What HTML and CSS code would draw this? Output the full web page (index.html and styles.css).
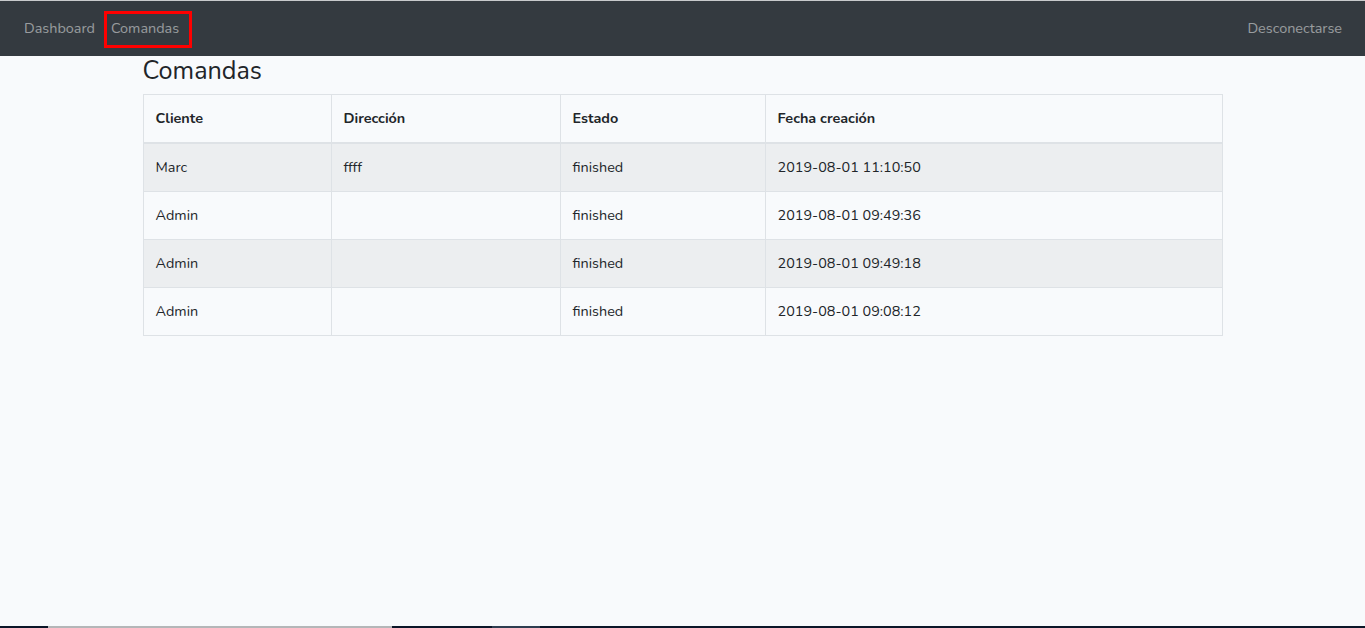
FILE: index.html
```html
<!DOCTYPE html>
<html lang="es">
<head>
<meta charset="utf-8">
<title>Comandas</title>
<link rel="stylesheet" href="styles.css">
</head>
<body>
<div class="topline"></div>
<nav class="navbar">
  <ul class="nav-left">
    <li><a class="nav-link" href="#">Dashboard</a></li>
    <li><a class="nav-link active" href="#">Comandas</a></li>
  </ul>
  <a class="nav-link" href="#">Desconectarse</a>
</nav>
<main class="page">
  <h3 class="title">Comandas</h3>
  <table class="table">
    <thead>
      <tr><th class="c1">Cliente</th><th class="c2">Dirección</th><th class="c3">Estado</th><th>Fecha creación</th></tr>
    </thead>
    <tbody>
      <tr class="odd"><td>Marc</td><td>ffff</td><td>finished</td><td>2019-08-01 11:10:50</td></tr>
      <tr><td>Admin</td><td></td><td>finished</td><td>2019-08-01 09:49:36</td></tr>
      <tr class="odd"><td>Admin</td><td></td><td>finished</td><td>2019-08-01 09:49:18</td></tr>
      <tr><td>Admin</td><td></td><td>finished</td><td>2019-08-01 09:08:12</td></tr>
    </tbody>
  </table>
</main>
<div class="taskbar">
  <span class="seg dark s1"></span>
  <span class="seg gray s2"></span>
  <span class="seg dark s3"></span>
  <span class="seg slate s4"></span>
  <span class="seg dark s5"></span>
</div>
</body>
</html>
```
FILE: styles.css
```css
html, body {
  margin: 0;
  padding: 0;
  height: 100%;
}
body {
  background: #f8fafc;
  color: #212529;
  font-family: "Nunito", "Lato", "Noto Sans", sans-serif;
  font-size: 14.4px;
  line-height: 1.6;
  display: flex;
  flex-direction: column;
}
.topline {
  height: 1px;
  background: #c8cacc;
}
.navbar {
  background: #343a40;
  height: 55px;
  display: flex;
  align-items: center;
  justify-content: space-between;
  padding: 0 15px 0 16px;
  box-sizing: border-box;
}
.nav-left {
  list-style: none;
  margin: 0;
  padding: 0;
  display: flex;
}
.nav-link {
  display: block;
  color: rgba(255, 255, 255, 0.5);
  text-decoration: none;
  padding: 8px 8px;
  line-height: 23px;
}
.nav-link.active {
  position: relative;
}
.nav-link.active::after {
  content: "";
  position: absolute;
  left: 1px;
  top: 2px;
  right: -5px;
  bottom: 0;
  border: 3px solid #ff0000;
}
.page {
  flex: 1;
  width: 1080px;
  margin: 0 auto;
}
.title {
  font-size: 25.2px;
  font-weight: 400;
  line-height: 30px;
  margin: 0 0 8px 0;
}
.table {
  width: 1080px;
  border-collapse: collapse;
  table-layout: fixed;
}
.table th, .table td {
  border: 1px solid #dee2e6;
  padding: 12px 12px;
  text-align: left;
  height: 23px;
  line-height: 23px;
  vertical-align: top;
}
.table th {
  font-weight: 700;
  border-bottom-width: 2px;
}
.table .c1 { width: 163px; }
.table .c2 { width: 204px; }
.table .c3 { width: 180px; }
.table tr.odd td {
  background: #eceef0;
}
.taskbar {
  height: 2px;
  display: flex;
  background: #0b1628;
}
.seg { display: block; height: 2px; }
.s1 { width: 48px; }
.s2 { width: 344px; }
.s3 { width: 100px; }
.s4 { width: 48px; }
.s5 { flex: 1; }
.dark { background: #0b1628; }
.gray { background: #b4b6b8; }
.slate { background: #2e3d50; }
```
